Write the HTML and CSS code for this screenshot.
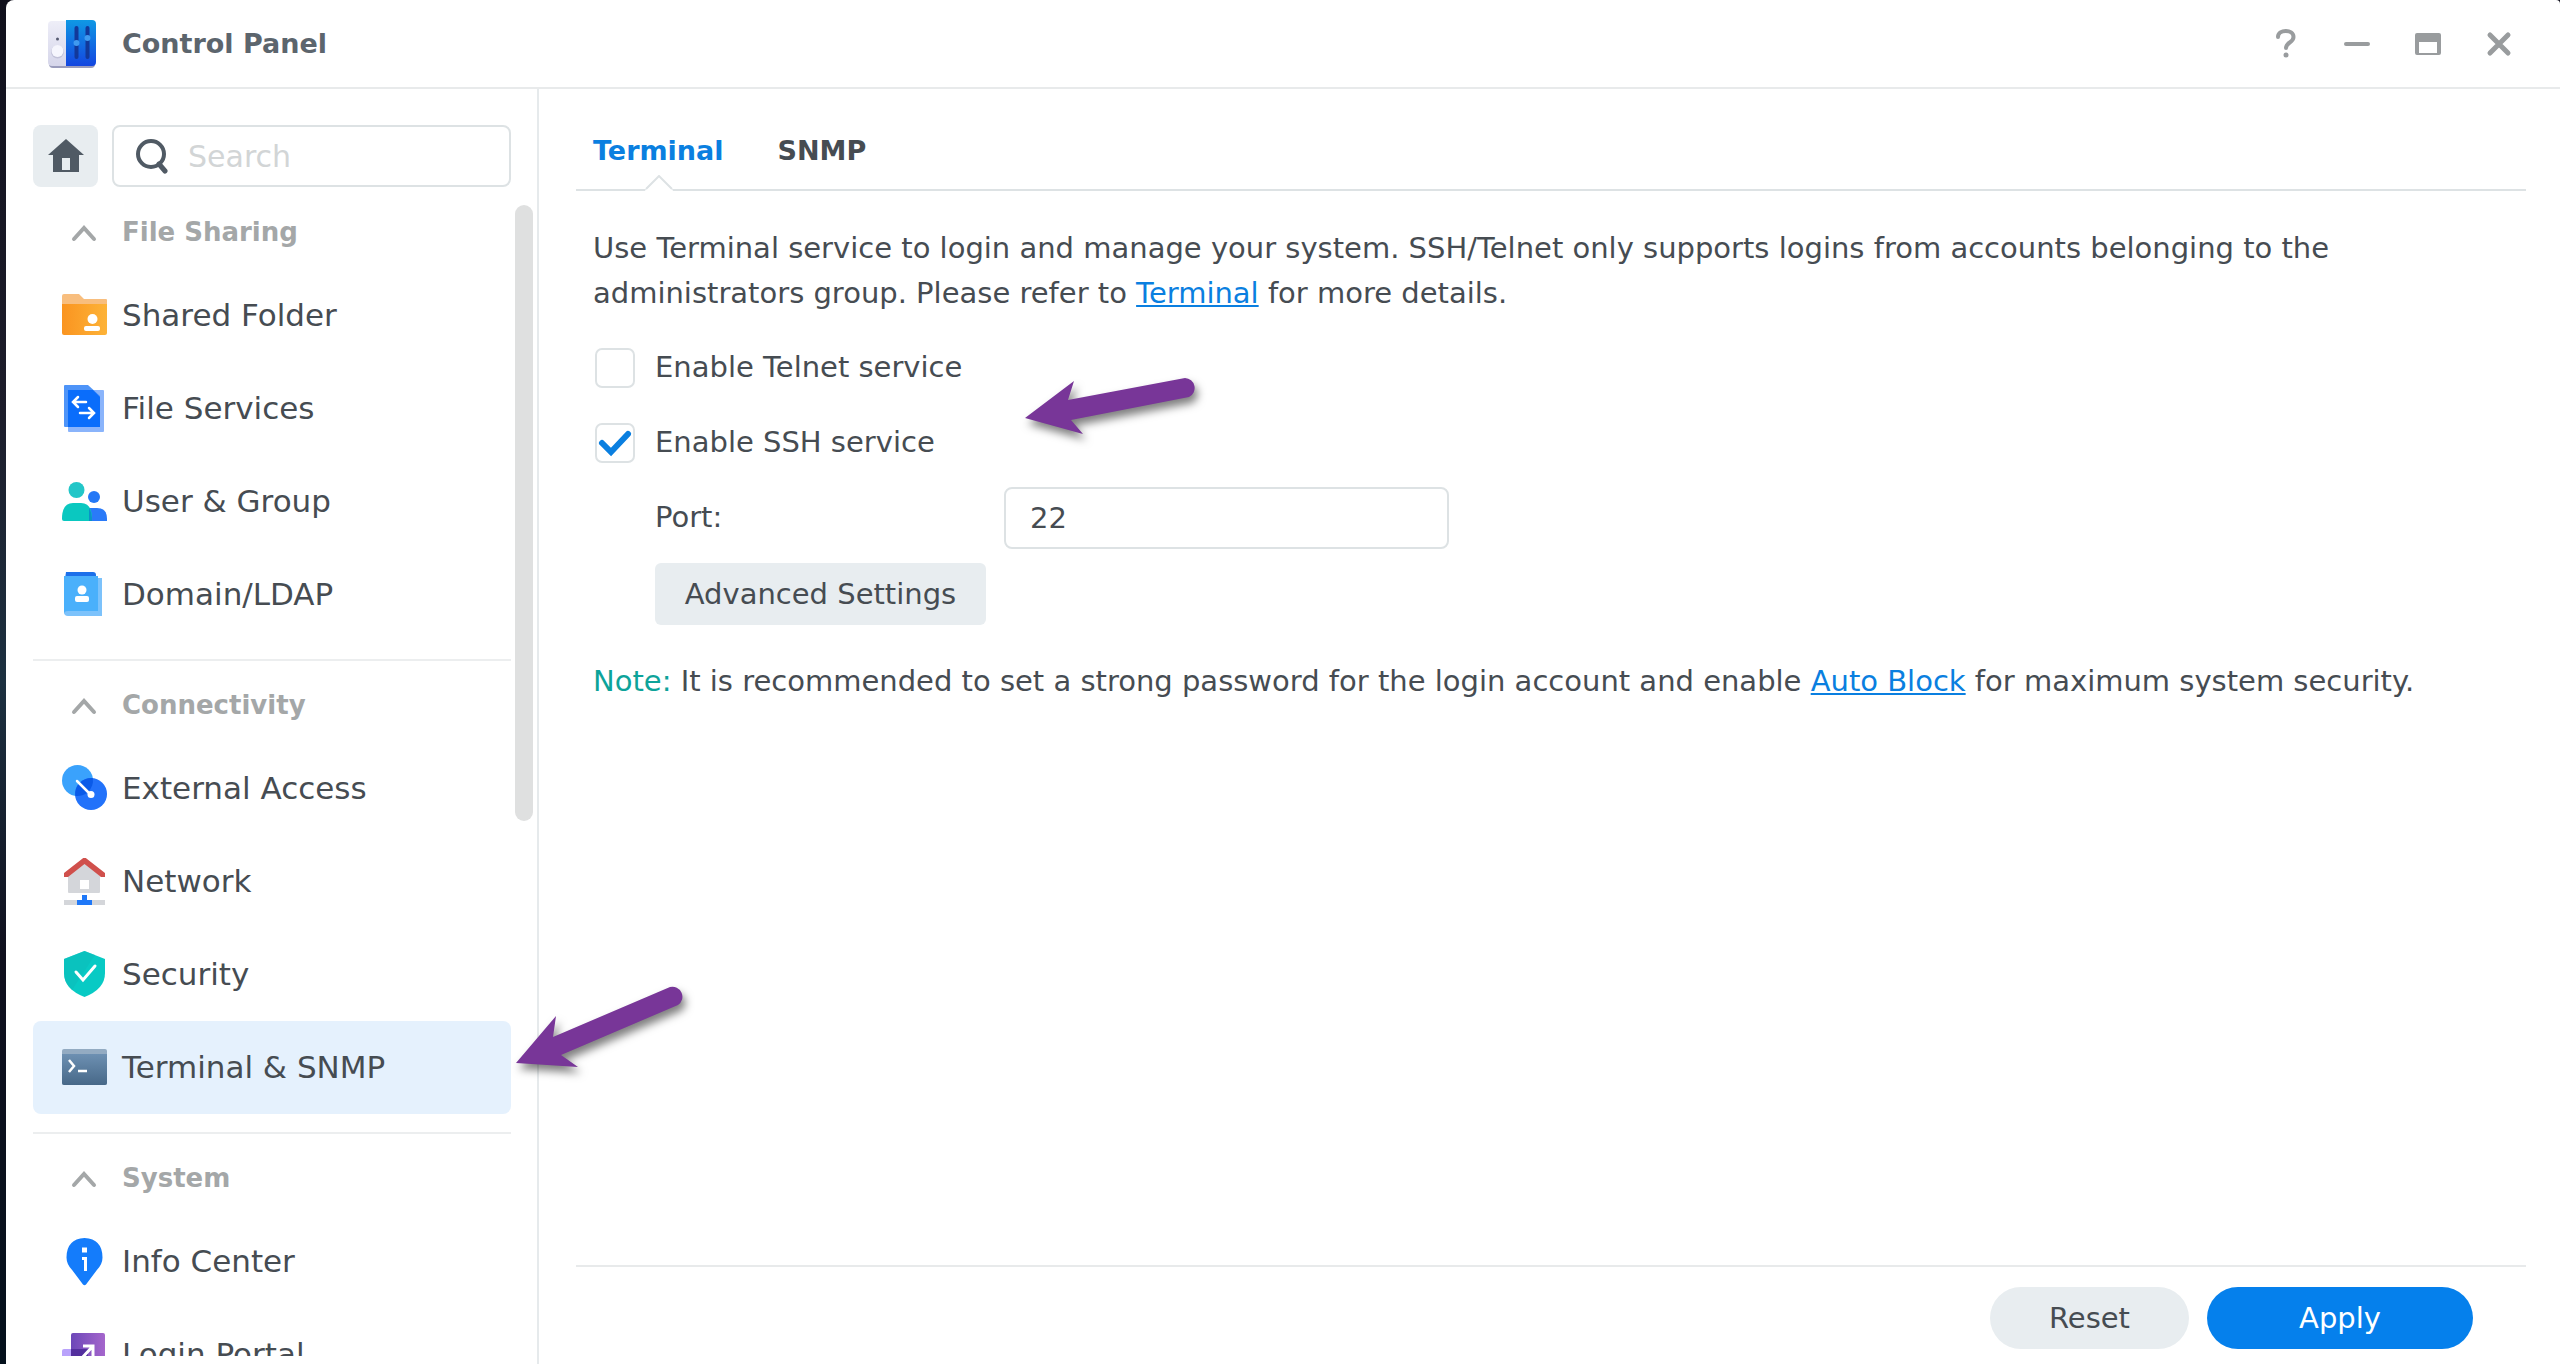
FILE: index.html
```
<!DOCTYPE html>
<html lang="en">
<head>
    <meta charset="UTF-8">
    <meta name="viewport" content="width=device-width, initial-scale=1.0">
    <title>Control Panel</title>
    <link rel="stylesheet" href="styles.css">
</head>
<body>
<div class="window">
    <!-- title bar -->
    <header class="titlebar">
        <svg class="app-icon" viewBox="0 0 50 50">
            <defs>
                <linearGradient id="appBlue" x1="0" y1="0" x2="0" y2="1"><stop offset="0" stop-color="#0f98e4"/><stop offset="1" stop-color="#1446e0"/></linearGradient>
                <linearGradient id="appGrey" x1="0" y1="0" x2="0" y2="1"><stop offset="0" stop-color="#eeeef8"/><stop offset="1" stop-color="#d6d6ea"/></linearGradient>
            </defs>
            <rect x="2" y="3" width="46" height="46" rx="4" fill="#9a9cbc"/>
            <path d="M5 2h14v45H5q-4 0-4-4V6q0-4 4-4z" fill="url(#appGrey)"/>
            <path d="M19 1h26q4 0 4 4v38q0 4-4 4H19z" fill="url(#appBlue)"/>
            <circle cx="10.500" cy="33" r="6.500" fill="#c2c2d8"/>
            <circle cx="10.500" cy="32" r="6" fill="#f6f6fd"/>
            <circle cx="10.500" cy="20" r="1.500" fill="#555a70"/>
            <path d="M29.500 9v29M40.500 9v29" stroke="#12389a" stroke-width="4" stroke-linecap="round"/>
            <circle cx="29.500" cy="24" r="3" fill="#3f9af0"/>
            <circle cx="40.500" cy="19" r="3" fill="#3f9af0"/>
        </svg>
        <h1 class="title">Control Panel</h1>
        <div class="tools">
            <button class="tool" aria-label="Help"><svg viewBox="0 0 30 30"><path d="M7 8C7 0 22.500 0 22.500 8C22.500 14 15 13 15 19" fill="none" stroke="#999c9e" stroke-width="4" stroke-linecap="round"/><circle cx="15" cy="26" r="2.500" fill="#999c9e"/></svg></button>
            <button class="tool" aria-label="Minimize"><svg viewBox="0 0 30 30"><path d="M4 15h22" stroke="#999c9e" stroke-width="4" stroke-linecap="round"/></svg></button>
            <button class="tool" aria-label="Maximize"><svg viewBox="0 0 30 30"><path fill-rule="evenodd" d="M4 4h22q2 0 2 2v18q0 2-2 2H4q-2 0-2-2V6q0-2 2-2zM6 13v11h18V13z" fill="#999c9e"/></svg></button>
            <button class="tool" aria-label="Close"><svg viewBox="0 0 30 30"><path d="M6 6l18 18M24 6L6 24" stroke="#999c9e" stroke-width="5" stroke-linecap="round"/></svg></button>
        </div>
    </header>

    <div class="body">
        <!-- sidebar -->
        <aside class="sidebar">
            <div class="search-row">
                <button class="home" aria-label="Home">
                    <svg viewBox="0 0 36 34"><path fill-rule="evenodd" d="M18 0L36 16H31V33H5V16H0zM14 19v12h8V19z" fill="#505a64"/></svg>
                </button>
                <label class="search">
                    <svg viewBox="0 0 32 36"><circle cx="15" cy="16" r="13" fill="none" stroke="#505a64" stroke-width="4"/><path d="M23 26l6 7" stroke="#505a64" stroke-width="5" stroke-linecap="round"/></svg>
                    <input type="text" placeholder="Search" aria-label="Search">
                </label>
            </div>
            <nav class="menu">
                <section class="group">
                    <h2 class="group-title"><svg viewBox="0 0 26 18"><path d="M3 15L13 4L23 15" /></svg>File Sharing</h2>
                    <a class="item" href="#">
                        <svg viewBox="0 0 48 48">
                            <defs><linearGradient id="orange"><stop offset="0" stop-color="#fa9420"/><stop offset="1" stop-color="#fdb338"/></linearGradient></defs>
                            <path d="M3 2h15l5 5h22q1 0 1 1v8H1V4q0-2 2-2z" fill="#f8be7e"/>
                            <path d="M1 12h45v29q0 2-2 2H3q-2 0-2-2z" fill="url(#orange)"/>
                            <circle cx="31.500" cy="27" r="5" fill="#fff"/><rect x="23" y="34" width="16" height="5" rx="2" fill="#fff"/>
                        </svg>
                        <span>Shared Folder</span>
                    </a>
                    <a class="item" href="#">
                        <svg viewBox="0 0 48 48">
                            <rect x="7" y="5" width="36" height="42" rx="1" fill="#8ab4fb"/>
                            <path d="M4 0h23l12 11v31H4q-1 0-1-1V1q0-1 1-1z" fill="#4e94f8"/>
                            <path d="M7 5h25l7 7v30H7z" fill="#0a6dfb"/>
                            <path d="M25 17H13M17 12l-5 5 5 5M19 28h13M28 23l5 5-5 5" fill="none" stroke="#fff" stroke-width="2.500" stroke-linecap="round"/>
                        </svg>
                        <span>File Services</span>
                    </a>
                    <a class="item" href="#">
                        <svg viewBox="0 0 48 48">
                            <circle cx="33" cy="19" r="6" fill="#2478f6"/><path d="M22 43V30h14q10 0 10 11v2z" fill="#2a7af8"/>
                            <circle cx="15.500" cy="12" r="8" fill="#22c6c8"/><path d="M1 41Q1 25 12 25h8q11 0 11 16v2H3q-2 0-2-2z" fill="#0ac8c0"/>
                            <path d="M28 30q3 4 3 13h-3z" fill="#0a92c8"/>
                        </svg>
                        <span>User &amp; Group</span>
                    </a>
                    <a class="item" href="#">
                        <svg viewBox="0 0 48 48">
                            <path d="M5 1h27q3 0 3 3v4H4z" fill="#1c70ea"/>
                            <path d="M7 7h34v38H7q-4 0-4-4z" fill="#7cc2fb"/>
                            <path d="M3 5h34v35H7q-4 0-4 3z" fill="#4ab0fb"/>
                            <circle cx="21" cy="19" r="4.500" fill="#fff"/><rect x="14" y="25" width="14" height="6" rx="2" fill="#fff"/>
                        </svg>
                        <span>Domain/LDAP</span>
                    </a>
                </section>
                <section class="group">
                    <h2 class="group-title"><svg viewBox="0 0 26 18"><path d="M3 15L13 4L23 15" /></svg>Connectivity</h2>
                    <a class="item" href="#">
                        <svg viewBox="0 0 48 48">
                            <circle cx="16.500" cy="15.500" r="15.500" fill="#3aa2fc"/><circle cx="30" cy="29" r="16" fill="#2272fa"/>
                            <path d="M31.800 13.100A15.500 15.500 0 0 1 14.200 30.800A16 16 0 0 1 31.800 13.100z" fill="#0a5ae8"/>
                            <path d="M16 16l14 14" stroke="#fff" stroke-width="2.500" stroke-linecap="round"/><circle cx="30" cy="29.500" r="3.500" fill="#fff"/>
                        </svg>
                        <span>External Access</span>
                    </a>
                    <a class="item" href="#">
                        <svg viewBox="0 0 48 48">
                            <path fill-rule="evenodd" d="M23.500 4L39 18v16q0 1-1 1H8q-1 0-1-1V18zM19 22v9h9v-9z" fill="#d4d6da"/>
                            <path d="M23.500-1L44 15v4h-4L23.500 6 7 19H3v-4z" fill="#d0504c"/>
                            <path d="M3 42h41v5H3z" fill="#d4d6da"/><path d="M21 37h5v5h5v5H16v-5h5z" fill="#1f78f8"/>
                        </svg>
                        <span>Network</span>
                    </a>
                    <a class="item" href="#">
                        <svg viewBox="0 0 48 48">
                            <path d="M23.500 0L44 8v14q0 16-20.500 24Q3 38 3 22V8z" fill="#08cac4"/>
                            <path d="M23.500 0L3 8v14q0 10 8 17L34 4z" fill="#0bbcba" opacity=".6"/>
                            <path d="M15 21l7 8 12-14" fill="none" stroke="#fff" stroke-width="3" stroke-linecap="round"/>
                        </svg>
                        <span>Security</span>
                    </a>
                    <a class="item active" href="#">
                        <svg viewBox="0 0 48 48">
                            <defs><linearGradient id="steel" x1="0" y1="0" x2="0" y2="1"><stop offset="0" stop-color="#6d90b2"/><stop offset="1" stop-color="#476888"/></linearGradient></defs>
                            <rect x="1" y="5" width="45" height="36" rx="2" fill="#93abc2"/><path d="M1 10h45v29q0 2-2 2H3q-2 0-2-2z" fill="url(#steel)"/>
                            <path d="M8 16l5 6-5 6M17 27h9" fill="none" stroke="#fff" stroke-width="2.500"/>
                        </svg>
                        <span>Terminal &amp; SNMP</span>
                    </a>
                </section>
                <section class="group">
                    <h2 class="group-title"><svg viewBox="0 0 26 18"><path d="M3 15L13 4L23 15" /></svg>System</h2>
                    <a class="item" href="#">
                        <svg viewBox="0 0 48 48">
                            <path d="M23.500 0q18 1 18 19.500 0 7-6 13L25 46.500q-1.500 1.500-3 0L11.500 32.500q-6-6-6-13Q5.500 1 23.500 0z" fill="#147cfb"/>
                            <path d="M21 9.500h5v5h-5zM21 19h5v14h-3V22h-2z" fill="#fff"/>
                        </svg>
                        <span>Info Center</span>
                    </a>
                    <a class="item" href="#">
                        <svg viewBox="0 0 48 48">
                            <defs><linearGradient id="purple"><stop offset="0" stop-color="#6c47b8"/><stop offset="1" stop-color="#a566cc"/></linearGradient></defs>
                            <rect x="1" y="18" width="26" height="28" rx="2" fill="#b9a2fb"/><rect x="10" y="2" width="34" height="34" rx="2" fill="url(#purple)"/>
                            <path d="M10 18h17v18H10z" fill="#532f9e"/><path d="M22 15h10v10M32 15L20 28" fill="none" stroke="#fff" stroke-width="3"/>
                        </svg>
                        <span>Login Portal</span>
                    </a>
                </section>
            </nav>
            <div class="scrollbar"></div>
        </aside>

        <!-- terminal settings -->
        <main class="content">
            <nav class="tabs">
                <a class="tab current" href="#">Terminal
                    <svg class="caret" viewBox="0 0 28 16"><path d="M0 16L1 14L14 1L27 14L28 16z" fill="#fff"/><path d="M1 14L14 1L27 14" fill="none" stroke="#dde2e4" stroke-width="2"/></svg>
                </a>
                <a class="tab" href="#">SNMP</a>
            </nav>
            <form class="form" id="terminal-form">
                <p class="desc">Use Terminal service to login and manage your system. SSH/Telnet only supports logins from accounts belonging to the<br>administrators group. Please refer to <a href="#">Terminal</a> for more details.</p>
                <label class="check"><input type="checkbox">Enable Telnet service</label>
                <label class="check"><input type="checkbox" checked>Enable SSH service</label>
                <div class="field">
                    <label for="port">Port:</label>
                    <input id="port" type="text" value="22">
                </div>
                <button class="btn advanced" type="button">Advanced Settings</button>
                <p class="note"><span class="note-label">Note:</span> It is recommended to set a strong password for the login account and enable <a href="#">Auto Block</a> for maximum system security.</p>
            </form>
            <footer class="footer">
                <button class="btn reset" type="reset" form="terminal-form">Reset</button>
                <button class="btn apply" type="submit" form="terminal-form">Apply</button>
            </footer>
        </main>
    </div>
</div>

<!-- arrows drawn over the window -->
<svg class="arrow arrow-ssh" viewBox="0 0 180 70"><path d="M5 43L54 6L48 25L165 3A10 10 0 0 1 169 22L51 45L63 59z"/></svg>
<svg class="arrow arrow-menu" viewBox="0 0 180 100"><path d="M5 83L45 36L42 57L159 7A10 10 0 0 1 167 25L50 75L67 87z"/></svg>
</body>
</html>
```
FILE: styles.css
```
* { box-sizing: border-box; }
html, body { height: 100%; }
body {
    margin: 0;
    padding-left: 6px;
    overflow: hidden;
    background: linear-gradient(#10101c, #1d1d2b 30%, #1c3040 50%, #10101e 70%, #04101c);
    font-family: Verdana, "DejaVu Sans", sans-serif;
    font-size: 29px;
    line-height: 45px;
    color: #464c52;
}
h1, h2, p { margin: 0; }
a { color: #0a7fe0; }
button, input { font: inherit; color: inherit; }
button { border: none; cursor: pointer; }

.window {
    display: flex;
    flex-direction: column;
    height: 100%;
    background: #fff;
    border-radius: 8px 4px 0 0;
}
.titlebar {
    display: flex;
    align-items: center;
    height: 89px;
    padding: 0 46px 0 41px;
    border-bottom: 2px solid #e8eaeb;
}
.app-icon { width: 50px; height: 50px; }
.title { margin-left: 25px; font-size: 27px; color: #5c656d; }
.tools { display: flex; gap: 41px; margin-left: auto; }
.tool { width: 30px; height: 30px; padding: 0; background: none; }
.tool svg { display: block; }

.body { display: flex; flex: 1; min-height: 0; }

/* sidebar */
.sidebar {
    position: relative;
    display: flex;
    flex-direction: column;
    width: 533px;
    padding: 36px 26px 8px 27px;
    border-right: 2px solid #e6eaec;
}
.search-row { display: flex; gap: 14px; font-size: 30px; }
.home {
    display: flex;
    align-items: center;
    justify-content: center;
    width: 65px;
    height: 62px;
    padding: 0;
    background: #e8edf0;
    border-radius: 8px;
}
.home svg { width: 36px; height: 34px; }
.search {
    display: flex;
    align-items: center;
    flex: 1;
    min-width: 0;
    height: 62px;
    padding-left: 22px;
    border: 2px solid #dde2e4;
    border-radius: 8px;
}
.search svg { width: 32px; height: 36px; }
.search input {
    flex: 1;
    min-width: 0;
    margin-left: 20px;
    padding: 0;
    border: none;
    outline: none;
    background: none;
}
.search input::placeholder { color: #d2d5d6; opacity: 1; }
.menu { flex: 1; min-height: 0; margin-top: 1px; overflow: hidden; }
.group { padding-bottom: 18px; }
.group + .group { border-top: 2px solid #eceeef; }
.group-title {
    display: flex;
    align-items: center;
    height: 81px;
    padding: 8px 0 0 38px;
    gap: 25px;
    font-size: 26px;
    color: #a4a7a8;
}
.group-title svg {
    width: 26px;
    height: 18px;
    fill: none;
    stroke: #a4a7a8;
    stroke-width: 4;
    stroke-linecap: round;
}
.item {
    display: flex;
    align-items: center;
    height: 93px;
    padding-left: 28px;
    gap: 13px;
    border-radius: 8px;
    font-size: 31px;
    color: #464c52;
    text-decoration: none;
}
.item svg { width: 48px; height: 48px; }
.item.active { background: #e5f1fd; }
.scrollbar {
    position: absolute;
    top: 116px;
    right: 4px;
    width: 18px;
    height: 616px;
    border-radius: 9px;
    background: #dfe0e0;
}

/* content */
.content {
    display: flex;
    flex-direction: column;
    flex: 1;
    padding: 0 34px 0 37px;
}
.tabs {
    display: flex;
    gap: 54px;
    height: 102px;
    padding: 39px 17px 0;
    border-bottom: 2px solid #dde2e4;
}
.tab {
    position: relative;
    font-size: 27px;
    font-weight: bold;
    color: #464c52;
    text-decoration: none;
}
.tab.current { color: #0a7fe0; }
.caret { position: absolute; left: calc(50% - 13px); bottom: -2px; width: 28px; height: 16px; }
.form { flex: 1; padding: 35px 17px 0; }
.desc { margin-bottom: 14px; }
.check { display: flex; align-items: center; height: 75px; }
.check input {
    appearance: none;
    width: 40px;
    height: 40px;
    margin: 0 20px 0 2px;
    border: 2px solid #dde2e4;
    border-radius: 7px;
    background: #fff;
}
.check input:checked {
    background: url("data:image/svg+xml,%3Csvg xmlns='http://www.w3.org/2000/svg' viewBox='0 0 36 36'%3E%3Cpath d='M5 18l9 9 17-18' fill='none' stroke='%230a7fe0' stroke-width='6' stroke-linecap='round'/%3E%3C/svg%3E");
}
.field { display: flex; align-items: center; height: 75px; padding-left: 62px; }
.field label { width: 349px; }
.field input {
    width: 445px;
    height: 62px;
    padding: 0 24px;
    border: 2px solid #dde2e4;
    border-radius: 8px;
}
.btn { height: 62px; padding: 0; background: #e8edf0; border-radius: 31px; }
.advanced { display: block; width: 331px; margin: 8px 0 34px 62px; border-radius: 6px; }
.note-label { color: #0da39a; }
.footer {
    display: flex;
    justify-content: flex-end;
    gap: 18px;
    height: 99px;
    padding: 20px 53px 0 0;
    border-top: 2px solid #e8eaeb;
}
.reset { width: 199px; }
.apply { width: 266px; background: #0580ec; color: #fff; }

/* arrows */
.arrow { position: absolute; fill: #783698; overflow: visible; filter: drop-shadow(3px 6px 4px rgba(0, 0, 0, .5)); }
.arrow-ssh { left: 1020px; top: 375px; width: 180px; height: 70px; }
.arrow-menu { left: 511px; top: 980px; width: 180px; height: 100px; }
```
